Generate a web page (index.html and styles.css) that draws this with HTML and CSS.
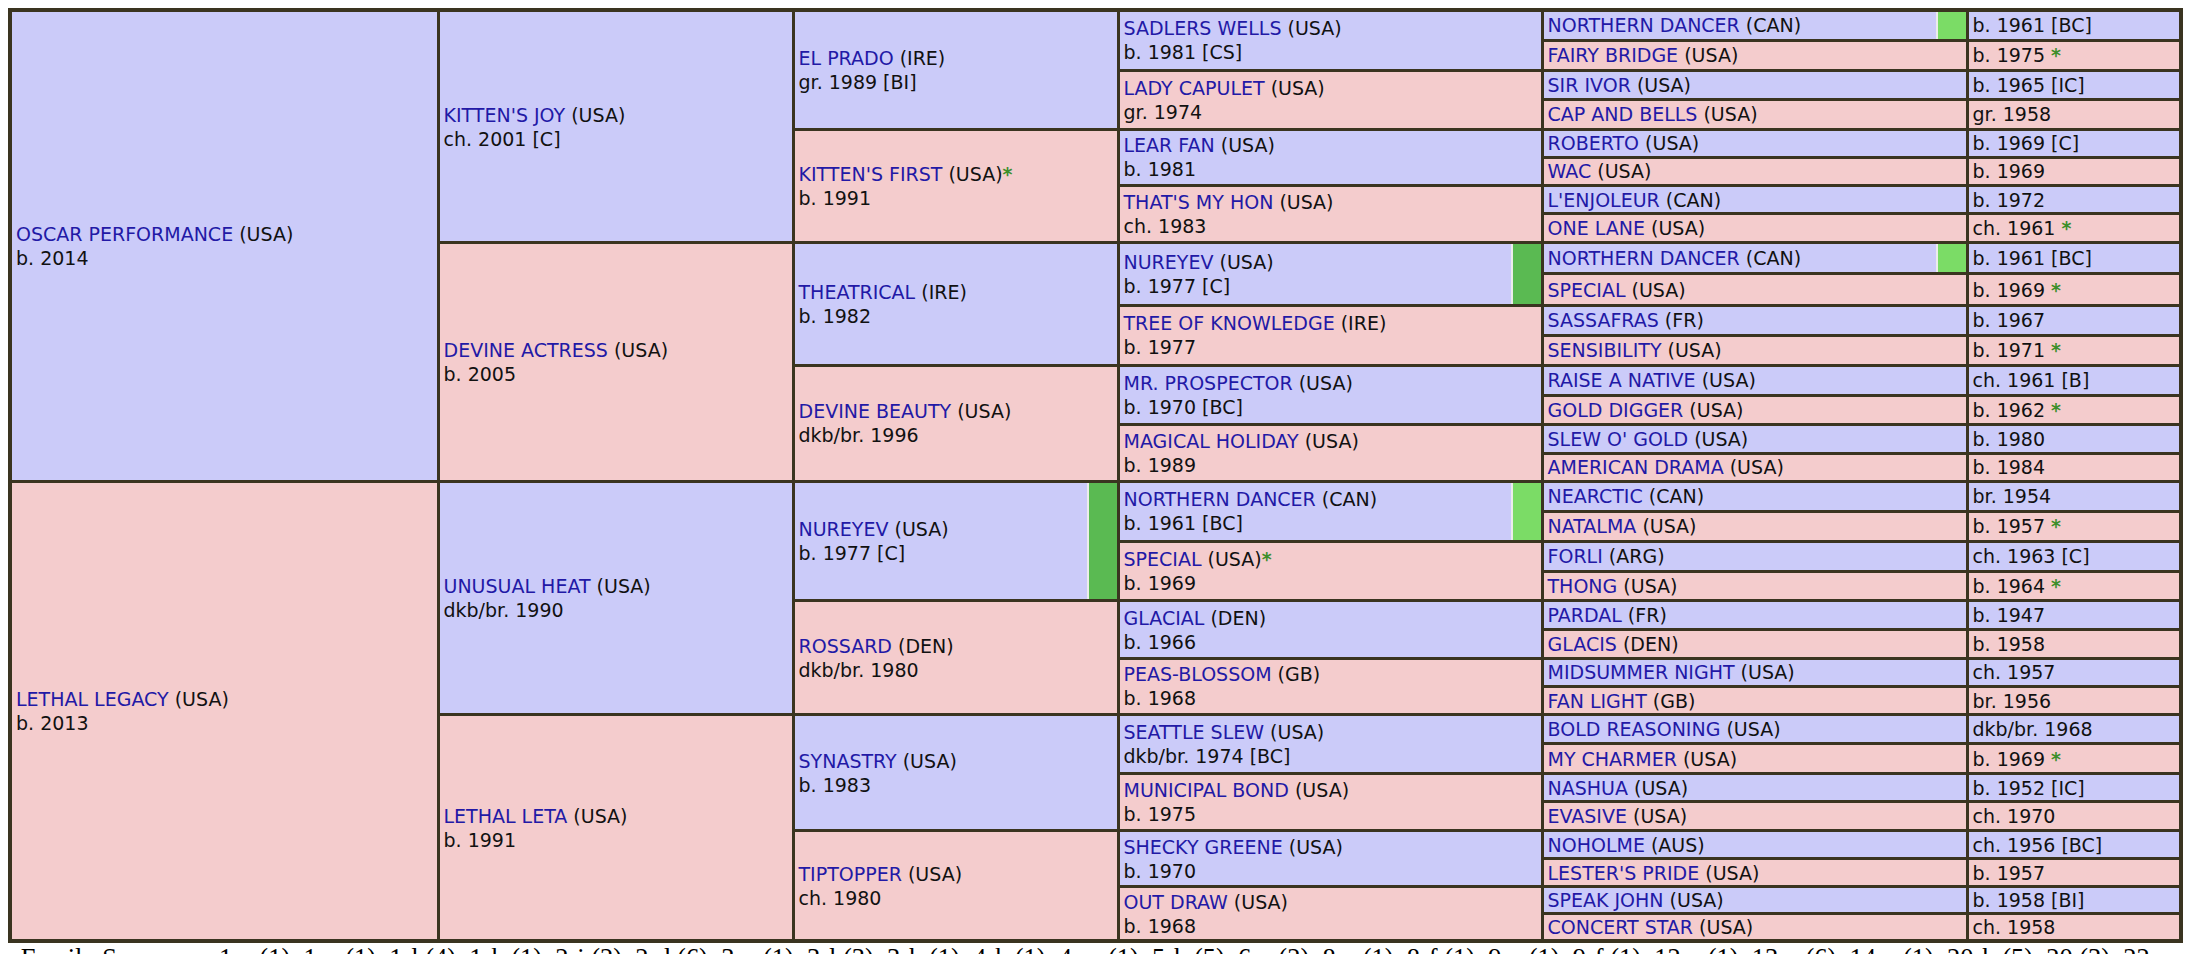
FILE: index.html
```html
<!DOCTYPE html>
<html lang="en">
<head>
<meta charset="utf-8">
<title>Oscar Performance x Lethal Legacy - Pedigree</title>
<link rel="stylesheet" href="styles.css">
</head>
<body>
<div class="ped">
  <!-- row 1 -->
  <div class="c g1 m"><div class="t"><a href="#">OSCAR PERFORMANCE</a> (USA)<br>b. 2014</div></div>
  <div class="c g2 m"><div class="t"><a href="#">KITTEN'S JOY</a> (USA)<br>ch. 2001 [C]</div></div>
  <div class="c g3 m"><div class="t"><a href="#">EL PRADO</a> (IRE)<br>gr. 1989 [BI]</div></div>
  <div class="c g4 m"><div class="t"><a href="#">SADLERS WELLS</a> (USA)<br>b. 1981 [CS]</div></div>
  <div class="c g5n m bar"><div class="t"><a href="#">NORTHERN DANCER</a> (CAN)</div><span class="inb lt"></span></div>
  <div class="c g5d m"><div class="t">b. 1961 [BC]</div></div>
  <!-- row 2 -->
  <div class="c g5n f"><div class="t"><a href="#">FAIRY BRIDGE</a> (USA)</div></div>
  <div class="c g5d f"><div class="t">b. 1975 <span class="star">*</span></div></div>
  <!-- row 3 -->
  <div class="c g4 f"><div class="t"><a href="#">LADY CAPULET</a> (USA)<br>gr. 1974</div></div>
  <div class="c g5n m"><div class="t"><a href="#">SIR IVOR</a> (USA)</div></div>
  <div class="c g5d m"><div class="t">b. 1965 [IC]</div></div>
  <!-- row 4 -->
  <div class="c g5n f"><div class="t"><a href="#">CAP AND BELLS</a> (USA)</div></div>
  <div class="c g5d f"><div class="t">gr. 1958</div></div>
  <!-- row 5 -->
  <div class="c g3 f"><div class="t"><a href="#">KITTEN'S FIRST</a> (USA)<span class="star">*</span><br>b. 1991</div></div>
  <div class="c g4 m"><div class="t"><a href="#">LEAR FAN</a> (USA)<br>b. 1981</div></div>
  <div class="c g5n m"><div class="t"><a href="#">ROBERTO</a> (USA)</div></div>
  <div class="c g5d m"><div class="t">b. 1969 [C]</div></div>
  <!-- row 6 -->
  <div class="c g5n f"><div class="t"><a href="#">WAC</a> (USA)</div></div>
  <div class="c g5d f"><div class="t">b. 1969</div></div>
  <!-- row 7 -->
  <div class="c g4 f"><div class="t"><a href="#">THAT'S MY HON</a> (USA)<br>ch. 1983</div></div>
  <div class="c g5n m"><div class="t"><a href="#">L'ENJOLEUR</a> (CAN)</div></div>
  <div class="c g5d m"><div class="t">b. 1972</div></div>
  <!-- row 8 -->
  <div class="c g5n f"><div class="t"><a href="#">ONE LANE</a> (USA)</div></div>
  <div class="c g5d f"><div class="t">ch. 1961 <span class="star">*</span></div></div>
  <!-- row 9 -->
  <div class="c g2 f"><div class="t"><a href="#">DEVINE ACTRESS</a> (USA)<br>b. 2005</div></div>
  <div class="c g3 m"><div class="t"><a href="#">THEATRICAL</a> (IRE)<br>b. 1982</div></div>
  <div class="c g4 m bar"><div class="t"><a href="#">NUREYEV</a> (USA)<br>b. 1977 [C]</div><span class="inb dk"></span></div>
  <div class="c g5n m bar"><div class="t"><a href="#">NORTHERN DANCER</a> (CAN)</div><span class="inb lt"></span></div>
  <div class="c g5d m"><div class="t">b. 1961 [BC]</div></div>
  <!-- row 10 -->
  <div class="c g5n f"><div class="t"><a href="#">SPECIAL</a> (USA)</div></div>
  <div class="c g5d f"><div class="t">b. 1969 <span class="star">*</span></div></div>
  <!-- row 11 -->
  <div class="c g4 f"><div class="t"><a href="#">TREE OF KNOWLEDGE</a> (IRE)<br>b. 1977</div></div>
  <div class="c g5n m"><div class="t"><a href="#">SASSAFRAS</a> (FR)</div></div>
  <div class="c g5d m"><div class="t">b. 1967</div></div>
  <!-- row 12 -->
  <div class="c g5n f"><div class="t"><a href="#">SENSIBILITY</a> (USA)</div></div>
  <div class="c g5d f"><div class="t">b. 1971 <span class="star">*</span></div></div>
  <!-- row 13 -->
  <div class="c g3 f"><div class="t"><a href="#">DEVINE BEAUTY</a> (USA)<br>dkb/br. 1996</div></div>
  <div class="c g4 m"><div class="t"><a href="#">MR. PROSPECTOR</a> (USA)<br>b. 1970 [BC]</div></div>
  <div class="c g5n m"><div class="t"><a href="#">RAISE A NATIVE</a> (USA)</div></div>
  <div class="c g5d m"><div class="t">ch. 1961 [B]</div></div>
  <!-- row 14 -->
  <div class="c g5n f"><div class="t"><a href="#">GOLD DIGGER</a> (USA)</div></div>
  <div class="c g5d f"><div class="t">b. 1962 <span class="star">*</span></div></div>
  <!-- row 15 -->
  <div class="c g4 f"><div class="t"><a href="#">MAGICAL HOLIDAY</a> (USA)<br>b. 1989</div></div>
  <div class="c g5n m"><div class="t"><a href="#">SLEW O' GOLD</a> (USA)</div></div>
  <div class="c g5d m"><div class="t">b. 1980</div></div>
  <!-- row 16 -->
  <div class="c g5n f"><div class="t"><a href="#">AMERICAN DRAMA</a> (USA)</div></div>
  <div class="c g5d f"><div class="t">b. 1984</div></div>
  <!-- row 17 -->
  <div class="c g1 f"><div class="t"><a href="#">LETHAL LEGACY</a> (USA)<br>b. 2013</div></div>
  <div class="c g2 m"><div class="t"><a href="#">UNUSUAL HEAT</a> (USA)<br>dkb/br. 1990</div></div>
  <div class="c g3 m bar"><div class="t"><a href="#">NUREYEV</a> (USA)<br>b. 1977 [C]</div><span class="inb dk"></span></div>
  <div class="c g4 m bar"><div class="t"><a href="#">NORTHERN DANCER</a> (CAN)<br>b. 1961 [BC]</div><span class="inb lt"></span></div>
  <div class="c g5n m"><div class="t"><a href="#">NEARCTIC</a> (CAN)</div></div>
  <div class="c g5d m"><div class="t">br. 1954</div></div>
  <!-- row 18 -->
  <div class="c g5n f"><div class="t"><a href="#">NATALMA</a> (USA)</div></div>
  <div class="c g5d f"><div class="t">b. 1957 <span class="star">*</span></div></div>
  <!-- row 19 -->
  <div class="c g4 f"><div class="t"><a href="#">SPECIAL</a> (USA)<span class="star">*</span><br>b. 1969</div></div>
  <div class="c g5n m"><div class="t"><a href="#">FORLI</a> (ARG)</div></div>
  <div class="c g5d m"><div class="t">ch. 1963 [C]</div></div>
  <!-- row 20 -->
  <div class="c g5n f"><div class="t"><a href="#">THONG</a> (USA)</div></div>
  <div class="c g5d f"><div class="t">b. 1964 <span class="star">*</span></div></div>
  <!-- row 21 -->
  <div class="c g3 f"><div class="t"><a href="#">ROSSARD</a> (DEN)<br>dkb/br. 1980</div></div>
  <div class="c g4 m"><div class="t"><a href="#">GLACIAL</a> (DEN)<br>b. 1966</div></div>
  <div class="c g5n m"><div class="t"><a href="#">PARDAL</a> (FR)</div></div>
  <div class="c g5d m"><div class="t">b. 1947</div></div>
  <!-- row 22 -->
  <div class="c g5n f"><div class="t"><a href="#">GLACIS</a> (DEN)</div></div>
  <div class="c g5d f"><div class="t">b. 1958</div></div>
  <!-- row 23 -->
  <div class="c g4 f"><div class="t"><a href="#">PEAS-BLOSSOM</a> (GB)<br>b. 1968</div></div>
  <div class="c g5n m"><div class="t"><a href="#">MIDSUMMER NIGHT</a> (USA)</div></div>
  <div class="c g5d m"><div class="t">ch. 1957</div></div>
  <!-- row 24 -->
  <div class="c g5n f"><div class="t"><a href="#">FAN LIGHT</a> (GB)</div></div>
  <div class="c g5d f"><div class="t">br. 1956</div></div>
  <!-- row 25 -->
  <div class="c g2 f"><div class="t"><a href="#">LETHAL LETA</a> (USA)<br>b. 1991</div></div>
  <div class="c g3 m"><div class="t"><a href="#">SYNASTRY</a> (USA)<br>b. 1983</div></div>
  <div class="c g4 m"><div class="t"><a href="#">SEATTLE SLEW</a> (USA)<br>dkb/br. 1974 [BC]</div></div>
  <div class="c g5n m"><div class="t"><a href="#">BOLD REASONING</a> (USA)</div></div>
  <div class="c g5d m"><div class="t">dkb/br. 1968</div></div>
  <!-- row 26 -->
  <div class="c g5n f"><div class="t"><a href="#">MY CHARMER</a> (USA)</div></div>
  <div class="c g5d f"><div class="t">b. 1969 <span class="star">*</span></div></div>
  <!-- row 27 -->
  <div class="c g4 f"><div class="t"><a href="#">MUNICIPAL BOND</a> (USA)<br>b. 1975</div></div>
  <div class="c g5n m"><div class="t"><a href="#">NASHUA</a> (USA)</div></div>
  <div class="c g5d m"><div class="t">b. 1952 [IC]</div></div>
  <!-- row 28 -->
  <div class="c g5n f"><div class="t"><a href="#">EVASIVE</a> (USA)</div></div>
  <div class="c g5d f"><div class="t">ch. 1970</div></div>
  <!-- row 29 -->
  <div class="c g3 f"><div class="t"><a href="#">TIPTOPPER</a> (USA)<br>ch. 1980</div></div>
  <div class="c g4 m"><div class="t"><a href="#">SHECKY GREENE</a> (USA)<br>b. 1970</div></div>
  <div class="c g5n m"><div class="t"><a href="#">NOHOLME</a> (AUS)</div></div>
  <div class="c g5d m"><div class="t">ch. 1956 [BC]</div></div>
  <!-- row 30 -->
  <div class="c g5n f"><div class="t"><a href="#">LESTER'S PRIDE</a> (USA)</div></div>
  <div class="c g5d f"><div class="t">b. 1957</div></div>
  <!-- row 31 -->
  <div class="c g4 f"><div class="t"><a href="#">OUT DRAW</a> (USA)<br>b. 1968</div></div>
  <div class="c g5n m"><div class="t"><a href="#">SPEAK JOHN</a> (USA)</div></div>
  <div class="c g5d m"><div class="t">b. 1958 [BI]</div></div>
  <!-- row 32 -->
  <div class="c g5n f"><div class="t"><a href="#">CONCERT STAR</a> (USA)</div></div>
  <div class="c g5d f"><div class="t">ch. 1958</div></div>
</div>
<p class="summary">Family Summary: 1-a (1), 1-n (1), 1-l (4), 1-k (1), 2-i (2), 2-d (6), 3-o (1), 3-l (3), 3-h (1), 4-k (1), 4-m (1), 5-h (5), 6-a (2), 8-c (1), 8-f (1), 9-e (1), 9-f (1), 12-c (1), 13-c (6), 14-c (1), 20-h (5), 20 (3), 22-a (1), 23-b (1), A1 (1)</p>
</body>
</html>
```

FILE: styles.css
```css
html {
  overflow: hidden;
}

body {
  margin: 8px;
  background: #ffffff;
  font-family: "DejaVu Sans", Verdana, sans-serif;
  color: #111111;
}

.ped {
  display: grid;
  grid-template-columns: 424.5fr 352fr 322fr 421fr 422fr 210.5fr;
  grid-template-rows:
    43fr 43fr 42fr 42fr 40fr 40fr 41fr 41fr
    45fr 45fr 43fr 43fr 43fr 43fr 40fr 40fr
    43fr 43fr 43fr 43fr 41fr 41fr 40fr 40fr
    42fr 42fr 41fr 41fr 40fr 40fr 38fr 38fr;
  gap: 3px;
  padding: 4px;
  height: 935px;
  box-sizing: border-box;
  background: #3a3420;
}

.c {
  display: flex;
  align-items: center;
  padding: 0 4px;
  font-size: 19px;
  line-height: 24px;
  white-space: nowrap;
  overflow: hidden;
  min-width: 0;
}

.m { background: #cbcbf9; }
.f { background: #f4cccd; }

.g1 { grid-column: 1; grid-row: span 16; }
.g2 { grid-column: 2; grid-row: span 8; }
.g3 { grid-column: 3; grid-row: span 4; }
.g4 { grid-column: 4; grid-row: span 2; }
.g5n { grid-column: 5; }
.g5d { grid-column: 6; }

.c a {
  color: #2219a6;
  text-decoration: none;
}

.star {
  color: #3d8f2b;
  font-weight: bold;
}

.bar {
  padding-right: 0;
}

.bar .t {
  flex: 1;
}

.inb {
  flex: none;
  align-self: stretch;
  width: 28px;
  border-left: 2px solid #ececec;
}

.inb.dk { background: #5aba52; }
.inb.lt { background: #7bdc66; }

.summary {
  margin: 0;
  font-family: "Liberation Serif", "Times New Roman", serif;
  font-size: 26.45px;
  text-align: center;
  color: #000000;
}
```
